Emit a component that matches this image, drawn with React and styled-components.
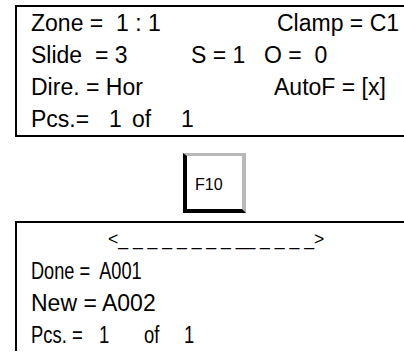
import React from 'react';
import styled, { createGlobalStyle } from 'styled-components';

const GlobalStyle = createGlobalStyle`
  html, body {
    margin: 0;
    padding: 0;
    background: #ffffff;
    overflow: hidden;
  }
  body {
    font-family: "Liberation Sans", Arial, sans-serif;
    color: #000000;
  }
`;

const Screen = styled.div`
  width: 404px;
  height: 352px;
  padding: 5px 0 0 15px;
  box-sizing: border-box;
  display: flex;
  flex-direction: column;
  overflow: hidden;
`;

const Panel = styled.div`
  width: 400px;
  box-sizing: border-box;
  border: 2px solid #000;
  border-bottom-width: ${p => (p.open ? 0 : 2)}px;
  padding-left: 14px;
  flex-shrink: 0;
`;

const Row = styled.div`
  display: flex;
  height: 32px;
  line-height: 32px;
  font-size: ${p => p.size || 23}px;
  white-space: pre;
`;

const Cell = styled.span`
  display: inline-block;
  width: ${p => (p.w ? `${p.w}px` : 'auto')};
  flex-shrink: 0;
  transform: ${p => (p.squeeze ? `scaleX(${p.squeeze})` : 'none')};
  transform-origin: left center;
`;

const KeyArea = styled.div`
  display: flex;
  justify-content: center;
  padding: 16px 0 8px;
  width: 389px;
`;

const KeyButton = styled.div`
  width: 63px;
  height: 60px;
  box-sizing: border-box;
  border-style: solid;
  border-width: 3px 4px 4px 4px;
  border-color: #b8b8b8 #b8b8b8 #000 #000;
  background: #fff;
  font-size: 16px;
  padding: 20px 0 0 8px;
  margin-left: 10px;
`;

const Ruler = styled.div`
  height: 32px;
  line-height: 32px;
  font-size: 17.6px;
  padding-left: 77px;
  white-space: pre;
`;

export default function App() {
  return (
    <>
      <GlobalStyle />
      <Screen>
        <Panel>
          <Row>
            <Cell w={246}>{'Zone =  1 : 1'}</Cell>
            <Cell>{'Clamp = C1'}</Cell>
          </Row>
          <Row>
            <Cell w={160}>{'Slide  = 3'}</Cell>
            <Cell w={73}>{'S = 1'}</Cell>
            <Cell>{'O =  0'}</Cell>
          </Row>
          <Row>
            <Cell w={243}>{'Dire. = Hor'}</Cell>
            <Cell>{'AutoF = [x]'}</Cell>
          </Row>
          <Row>
            <Cell w={78}>{'Pcs.='}</Cell>
            <Cell w={23}>{'1'}</Cell>
            <Cell w={49}>{'of'}</Cell>
            <Cell>{'1'}</Cell>
          </Row>
        </Panel>

        <KeyArea>
          <KeyButton>F10</KeyButton>
        </KeyArea>

        <Panel open>
          <Ruler>{'<_ _ _ _ _ _ _ _ __ _ _ _ _>'}</Ruler>
          <Row>
            <Cell squeeze={0.79}>{'Done =  A001'}</Cell>
          </Row>
          <Row>
            <Cell>{'New = A002'}</Cell>
          </Row>
          <Row>
            <Cell w={68} squeeze={0.8}>{'Pcs. ='}</Cell>
            <Cell w={45} squeeze={0.8}>{'1'}</Cell>
            <Cell w={40} squeeze={0.8}>{'of'}</Cell>
            <Cell squeeze={0.8}>{'1'}</Cell>
          </Row>
        </Panel>
      </Screen>
    </>
  );
}
